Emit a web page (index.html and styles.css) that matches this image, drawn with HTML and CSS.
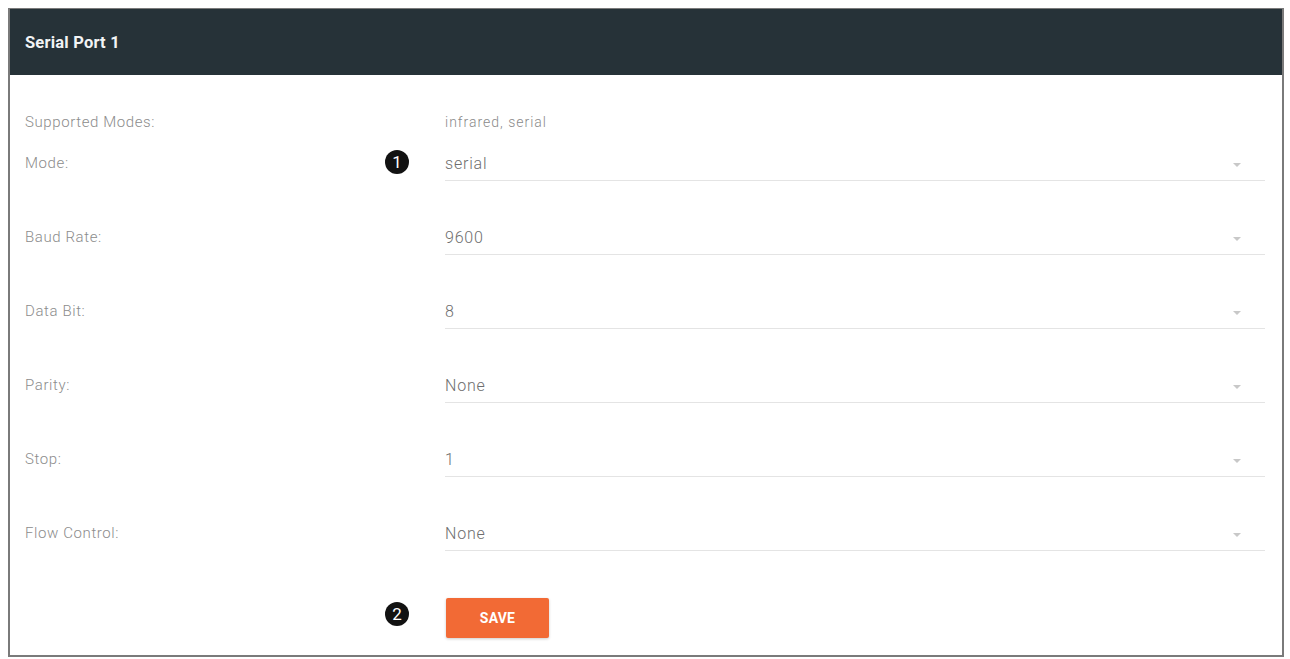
FILE: index.html
```html
<!DOCTYPE html>
<html lang="en">
<head>
<meta charset="utf-8">
<title>Serial Port 1</title>
<link rel="stylesheet" href="styles.css">
</head>
<body>
<section class="panel">
  <header class="panel-head">Serial Port 1</header>
  <div class="panel-body">
    <div class="row info">
      <div class="label">Supported Modes:</div>
      <div class="value-text">infrared, serial</div>
    </div>
    <div class="row field">
      <div class="label">Mode:<span class="badge">1</span></div>
      <div class="select"><span>serial</span><i class="caret"></i></div>
    </div>
    <div class="row field">
      <div class="label">Baud Rate:</div>
      <div class="select"><span>9600</span><i class="caret"></i></div>
    </div>
    <div class="row field">
      <div class="label">Data Bit:</div>
      <div class="select"><span>8</span><i class="caret"></i></div>
    </div>
    <div class="row field">
      <div class="label">Parity:</div>
      <div class="select"><span>None</span><i class="caret"></i></div>
    </div>
    <div class="row field">
      <div class="label">Stop:</div>
      <div class="select"><span>1</span><i class="caret"></i></div>
    </div>
    <div class="row field">
      <div class="label">Flow Control:</div>
      <div class="select"><span>None</span><i class="caret"></i></div>
    </div>
    <div class="row actions">
      <div class="label"><span></span><span class="badge">2</span></div>
      <div><button class="save" type="button">SAVE</button></div>
    </div>
  </div>
</section>
</body>
</html>
```
FILE: styles.css
```css
html, body {
  margin: 0;
  padding: 0;
  background: #ffffff;
}

body {
  font-family: Roboto, "Liberation Sans", Arial, sans-serif;
  color: #777;
}

.panel {
  margin: 8px 0 0 8px;
  width: 1276px;
  height: 649px;
  box-sizing: border-box;
  border: 2px solid #7a7a7a;
  border-top-width: 1px;
  display: flex;
  flex-direction: column;
}

.panel-head {
  height: 66px;
  background: #263238;
  color: #f2f4f5;
  font-weight: 700;
  font-size: 16.5px;
  letter-spacing: 0.2px;
  display: flex;
  align-items: center;
  padding-left: 15px;
  box-sizing: border-box;
}

.panel-body {
  padding: 37px 17px 0 15px;
}

.row {
  display: grid;
  grid-template-columns: 420px 1fr;
  align-items: center;
}

.label {
  font-size: 15px;
  font-weight: 300;
  letter-spacing: 0.6px;
  color: #8c8c8c;
  display: flex;
  justify-content: space-between;
  align-items: center;
  padding-right: 36px;
}

.info {
  height: 20px;
  margin-bottom: 13px;
}

.value-text {
  font-size: 14px;
  font-weight: 300;
  letter-spacing: 1px;
  color: #8a8a8a;
}

.field {
  height: 36px;
  margin-bottom: 38px;
}

.field .label {
  align-self: stretch;
}

.select {
  height: 36px;
  box-sizing: border-box;
  border-bottom: 1px solid #e4e4e4;
  display: flex;
  align-items: center;
  justify-content: space-between;
  padding-right: 24px;
  padding-top: 2px;
  font-size: 16px;
  font-weight: 300;
  letter-spacing: 0.8px;
  color: #6e6e6e;
}

.caret {
  width: 0;
  height: 0;
  border-left: 4px solid transparent;
  border-right: 4px solid transparent;
  border-top: 4px solid #c8c8c8;
  margin-top: 2px;
}

.badge {
  width: 24px;
  height: 24px;
  border-radius: 50%;
  background: #121212;
  color: #ffffff;
  font-size: 17px;
  font-weight: 400;
  letter-spacing: 0;
  display: flex;
  align-items: center;
  justify-content: center;
  margin-top: -2px;
}

.actions {
  margin-top: 47px;
  height: 40px;
}

.actions .badge {
  margin-top: -8px;
}

.save {
  width: 103px;
  height: 40px;
  border: none;
  border-radius: 2px;
  background: #f26a35;
  color: #ffffff;
  font-family: Roboto, "Liberation Sans", Arial, sans-serif;
  font-weight: 700;
  font-size: 14px;
  letter-spacing: 0.2px;
  box-shadow: 0 1px 3px rgba(0, 0, 0, 0.2);
  margin-left: 1px;
}
```
